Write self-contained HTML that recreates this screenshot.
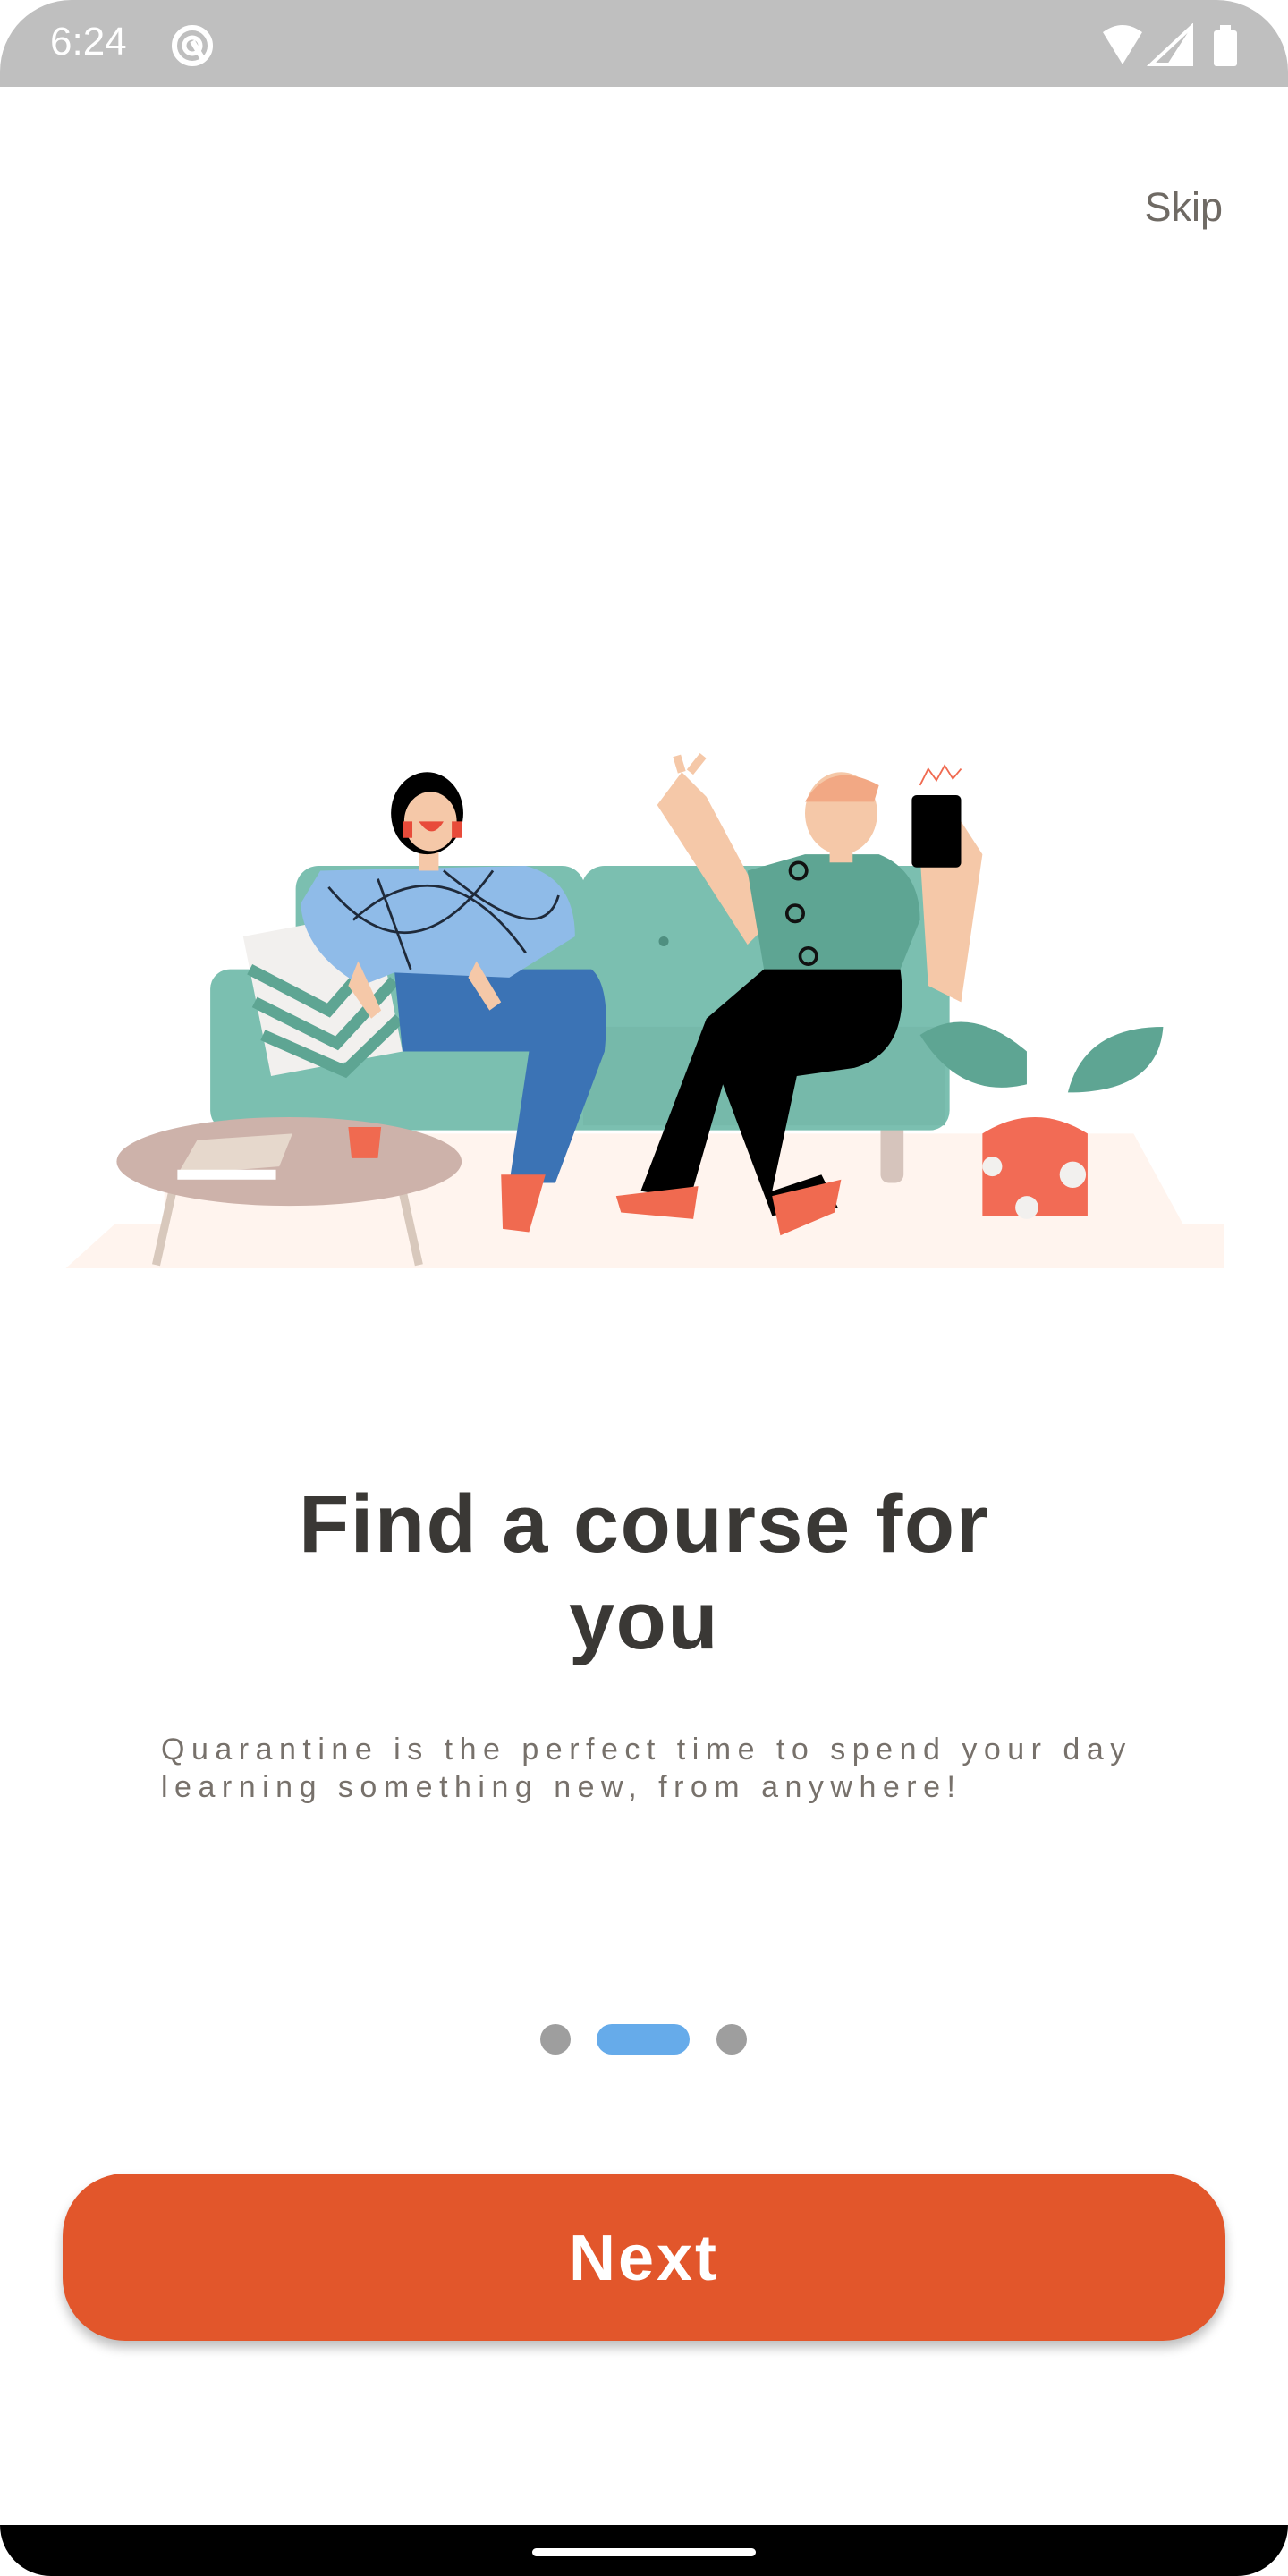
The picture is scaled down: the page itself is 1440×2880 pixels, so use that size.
<!DOCTYPE html>
<html><head><meta charset="utf-8"><style>
*{margin:0;padding:0;box-sizing:border-box}
html{width:1440px;height:2880px;overflow:hidden}
body{width:1440px;height:2880px;position:relative;background:#fff;font-family:"Liberation Sans",sans-serif;overflow:hidden}
.status{position:absolute;left:0;top:0;width:1440px;height:97px;background:#bfbfbf;border-radius:80px 80px 0 0}
.time{position:absolute;left:56px;top:22px;font-size:44px;color:#fff}
.skip{position:absolute;right:73px;top:206px;font-size:45px;color:#6f6a64}
h1{position:absolute;left:0;width:1440px;top:1650px;text-align:center;font-size:92px;line-height:108px;color:#3a3835;font-weight:bold;letter-spacing:1.5px}
.sub{position:absolute;left:180px;top:1935px;white-space:nowrap;font-size:34px;line-height:42px;color:#77716b;letter-spacing:7.5px}
.dot{position:absolute;top:2263px;height:34px;border-radius:17px;background:#9e9e9e}
.btn{position:absolute;left:70px;top:2430px;width:1300px;height:187px;border-radius:70px;background:#e2562b;box-shadow:0 8px 12px rgba(0,0,0,.25);color:#fff;font-weight:bold;font-size:72px;text-align:center;line-height:191px;letter-spacing:3px}
.nav{position:absolute;left:0;top:2823px;width:1440px;height:57px;background:#000;border-radius:0 0 80px 80px}
.handle{position:absolute;left:595px;top:26px;width:250px;height:9px;border-radius:5px;background:#fff}
svg.ill{position:absolute;left:0;top:0}
</style></head><body>
<div class="status"><div class="time">6:24</div>
<svg style="position:absolute;left:190px;top:26px" width="50" height="50" viewBox="0 0 50 50"><circle cx="25" cy="25" r="20" fill="none" stroke="#fff" stroke-width="6"/><circle cx="25" cy="25" r="9" fill="none" stroke="#fff" stroke-width="5"/><path d="M25 20 L38 42" stroke="#fff" stroke-width="6"/></svg>
<svg style="position:absolute;left:1225px;top:26px" width="170" height="50" viewBox="0 0 170 50"><path d="M8 10 Q30 -6 52 10 L30 46 Z" fill="#fff"/><path d="M107 4 L107 46 L62 46 Z" fill="none" stroke="#fff" stroke-width="4"/><path d="M107 4 L107 46 L80 46 Z" fill="#fff"/><rect x="132" y="8" width="26" height="40" rx="3" fill="#fff"/><rect x="139" y="2" width="12" height="8" fill="#fff"/></svg>
</div>
<div class="skip">Skip</div>
<svg class="ill" width="1440" height="1440" viewBox="0 0 784 784">
<path d="M100 690 L690 690 L720 745 L745 745 L745 772 L40 772 L70 745 L100 745 Z" fill="#fff4ee"/>
<rect x="536" y="680" width="14" height="40" rx="5" fill="#d6c4bc"/>
<rect x="180" y="527" width="176" height="120" rx="14" fill="#7bbfb0"/>
<rect x="354" y="527" width="220" height="110" rx="14" fill="#7bbfb0"/>
<rect x="128" y="590" width="450" height="98" rx="12" fill="#7bbfb0"/>
<rect x="355" y="625" width="220" height="60" fill="#76b9aa"/>
<circle cx="404" cy="573" r="3" fill="#4f8f80"/>
<path d="M148 570 L228 555 L245 640 L165 655 Z" fill="#f2f0ee"/>
<path d="M152 590 L200 615 L235 575 M155 610 L205 635 L240 597 M160 630 L210 652 L243 620" stroke="#5ea593" stroke-width="7" fill="none"/>
<path d="M240 590 L360 590 Q372 600 368 640 L338 720 L310 720 L322 640 L245 640 Z" fill="#3b73b5"/>
<path d="M305 715 L332 715 L322 750 L306 748 Z" fill="#f06a50"/>
<path d="M195 530 L320 527 Q350 535 350 570 L310 595 L240 592 L220 600 Q185 580 183 550 Z" fill="#8fbbe8"/>
<path d="M200 540 Q250 600 300 530 M230 535 L250 590 M270 530 Q330 580 340 545 M215 560 Q270 510 320 580" stroke="#1f2a3a" stroke-width="1.5" fill="none"/>
<path d="M218 585 L232 615 L226 620 L212 600 Z M290 585 L305 610 L298 615 L285 595 Z" fill="#f5c8a8"/>
<rect x="255" y="510" width="12" height="20" fill="#f5c8a8"/>
<ellipse cx="260" cy="495" rx="22" ry="25" fill="#000"/>
<ellipse cx="262" cy="500" rx="16" ry="18" fill="#f5c8a8"/>
<path d="M255 500 Q263 512 270 500 Z" fill="#e84b3a"/>
<rect x="245" y="500" width="6" height="10" fill="#e84b3a"/><rect x="275" y="500" width="6" height="10" fill="#e84b3a"/>
<path d="M400 490 L415 470 L430 485 L470 560 L455 575 Z" fill="#f5c8a8"/>
<path d="M415 470 L412 460 M420 470 L428 460" stroke="#f5c8a8" stroke-width="5"/>
<path d="M560 520 L585 500 L598 520 L585 610 L565 600 Z" fill="#f5c8a8"/>
<rect x="555" y="484" width="30" height="44" rx="3" fill="#000"/>
<path d="M560 478 L565 468 L570 475 L575 466 L580 474 L585 468" stroke="#f06a50" fill="none"/>
<path d="M455 530 L490 520 L535 520 Q560 530 560 560 L548 590 L465 590 Z" fill="#5ea593"/>
<circle cx="486" cy="530" r="5" fill="none" stroke="#111" stroke-width="2"/><circle cx="484" cy="556" r="5" fill="none" stroke="#111" stroke-width="2"/><circle cx="492" cy="582" r="5" fill="none" stroke="#111" stroke-width="2"/>
<rect x="505" y="505" width="14" height="20" fill="#f5c8a8"/>
<ellipse cx="512" cy="495" rx="22" ry="25" fill="#f5c8a8"/>
<path d="M490 488 Q505 462 535 478 L532 488 Z" fill="#f2a884"/>
<path d="M465 590 L548 590 Q555 640 520 650 L485 655 L470 725 L500 715 L510 735 L470 740 L440 660 L420 730 L390 725 L430 620 Z" fill="#000"/>
<path d="M375 728 L425 722 L422 742 L378 738 Z M470 728 L512 718 L508 738 L475 752 Z" fill="#f06a50"/>
<path d="M560 630 Q590 610 625 640 L625 660 Q585 670 560 630 Z" fill="#5ea593"/>
<path d="M650 665 Q660 625 708 625 Q705 665 650 665 Z" fill="#5ea593"/>
<path d="M598 690 Q630 670 662 690 L662 740 L598 740 Z" fill="#f26b55"/>
<circle cx="653" cy="715" r="8" fill="#f2f0ee"/><circle cx="604" cy="710" r="6" fill="#f2f0ee"/><circle cx="625" cy="735" r="7" fill="#f2f0ee"/>
<path d="M105 725 L95 770 M245 725 L255 770" stroke="#d8c8bc" stroke-width="5"/>
<ellipse cx="176" cy="707" rx="105" ry="27" fill="#cdb2aa"/>
<path d="M108 715 L170 710 L178 690 L120 694 Z" fill="#e6d8cc"/><rect x="108" y="712" width="60" height="6" fill="#fff"/>
<path d="M212 686 L232 686 L230 705 L214 705 Z" fill="#f06a50"/>
</svg>
<h1>Find a course for<br>you</h1>
<div class="sub">Quarantine is the perfect time to spend your day<br>learning something new, from anywhere!</div>
<div class="dot" style="left:604px;width:34px"></div>
<div class="dot" style="left:667px;width:104px;background:#66abea"></div>
<div class="dot" style="left:801px;width:34px"></div>
<div class="btn">Next</div>
<div class="nav"><div class="handle"></div></div>
</body></html>
